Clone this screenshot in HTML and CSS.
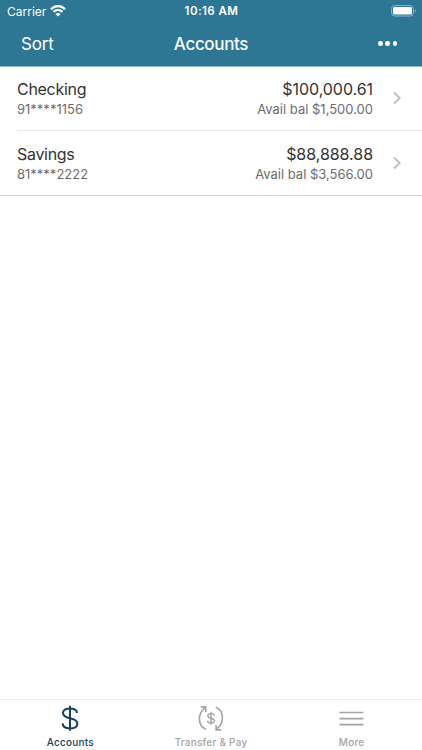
FILE: index.html
```html
<!DOCTYPE html>
<html lang="en">
<head>
  <meta charset="UTF-8" />
  <meta name="viewport" content="width=device-width, initial-scale=1.0" />
  <title>Accounts</title>
  <link rel="stylesheet" href="styles.css">
</head>
<body>
  <header class="header">
    <div class="status-bar">
      <div class="carrier">
        <span>Carrier</span>
        <svg width="16" height="12" viewBox="0 0 16 12" fill="none" stroke="#fff" stroke-width="2.3">
          <path d="M1 4.2C5 .2 11 .2 15 4.2" />
          <path d="M3.5 6.9c2.6-2.5 6.4-2.5 9 0" />
          <path d="M8 11.6 5.4 9c1.5-1.4 3.7-1.4 5.2 0z" fill="#fff" stroke="none" />
        </svg>
      </div>
      <span class="time">10:16 AM</span>
      <svg class="battery" width="26" height="12" viewBox="0 0 26 12">
        <rect x=".6" y=".6" width="21.8" height="10.4" rx="3" fill="none" stroke="#8fb7c7" stroke-width="1" />
        <rect x="2" y="2" width="19" height="7.6" rx="1.6" fill="#fff" />
        <path d="M23.8 4v3.6c1.4-.5 1.4-3.1 0-3.6z" fill="#8fb7c7" />
      </svg>
    </div>
    <nav class="nav-bar">
      <a class="sort">Sort</a>
      <h1>Accounts</h1>
      <div class="dots"><i></i><i></i><i></i></div>
    </nav>
  </header>

  <main class="accounts">
    <div class="account">
      <div class="info">
        <div class="name">Checking</div>
        <div class="number">91****1156</div>
      </div>
      <div class="info balance">
        <div class="amount">$100,000.61</div>
        <div class="avail">Avail bal $1,500.00</div>
      </div>
      <svg class="chevron" width="8" height="14" viewBox="0 0 8 14"><path d="M1 1.5 6.8 7 1 12.5" /></svg>
    </div>
    <div class="account">
      <div class="info">
        <div class="name">Savings</div>
        <div class="number">81****2222</div>
      </div>
      <div class="info balance">
        <div class="amount">$88,888.88</div>
        <div class="avail">Avail bal $3,566.00</div>
      </div>
      <svg class="chevron" width="8" height="14" viewBox="0 0 8 14"><path d="M1 1.5 6.8 7 1 12.5" /></svg>
    </div>
  </main>

  <footer class="tab-bar">
    <a class="tab active">
      <svg width="28" height="28" viewBox="0 0 28 28" stroke-width="2">
        <path d="M14 1.8v25M21 9C21 5.8 18 4.4 14 4.4S7 5.8 7 9c0 3.4 3.1 4.4 7 5.2s7.4 1.8 7.4 5.3c0 3.3-3.3 4.9-7.4 4.9s-7.3-1.6-7.4-5" />
      </svg>
      <span>Accounts</span>
    </a>
    <a class="tab transfer">
      <svg width="28" height="28" viewBox="0 0 28 28" stroke-width="1.6">
        <path d="M9 25.6C.7 21.6-.1 9.8 8.4 3.4M3.8 2.9h5v5" />
        <path d="M18.8 3c8.4 4 9 16 .6 22.4M24.2 25.9h-5.1v-5" />
        <path d="M14 7.8v13M17.3 11.6c-.1-1.4-1.5-2-3.3-2s-3.2.7-3.2 2.2c0 3.4 6.7 1.6 6.7 5 0 1.6-1.5 2.3-3.5 2.3s-3.4-.8-3.5-2.3" stroke-width="1.4" />
      </svg>
      <span>Transfer &amp; Pay</span>
    </a>
    <a class="tab">
      <svg width="28" height="28" viewBox="0 0 28 28" stroke-width="1.6">
        <path d="M1.5 8.5h24M1.5 14.6h24M1.5 20.6h24" />
      </svg>
      <span>More</span>
    </a>
  </footer>
</body>
</html>
```

FILE: styles.css
```css
* {
  margin: 0;
  padding: 0;
  box-sizing: border-box;
}

body {
  font-family: Inter, "Liberation Sans", sans-serif;
  background: #fff;
  color: #333;
  height: 100vh;
  display: flex;
  flex-direction: column;
  overflow: hidden;
}

svg {
  display: block;
}

.header {
  height: 67px;
  background: #2d7694;
  color: white;
  border-bottom: 1px solid #91b5c4;
}

.status-bar {
  height: 22px;
  padding: 0 6px 0 7px;
  display: grid;
  grid-template-columns: 1fr auto 1fr;
  align-items: center;
  font-size: 12px;
}

.carrier {
  display: flex;
  align-items: center;
  gap: 4px;
}

.time {
  font-weight: 600;
  font-size: 11.5px;
  letter-spacing: 0.45px;
}

.battery {
  justify-self: end;
  margin-right: -1px;
}

.nav-bar {
  height: 43px;
  padding: 0 21px;
  display: grid;
  grid-template-columns: 1fr auto 1fr;
  align-items: center;
  font-size: 17px;
}

.sort {
  letter-spacing: -0.2px;
}

.nav-bar h1 {
  font-size: 17px;
  font-weight: 500;
  letter-spacing: -0.35px;
}

.dots {
  display: flex;
  justify-content: flex-end;
  gap: 2.8px;
  margin-right: 4px;
}

.dots i {
  width: 4.4px;
  height: 4.4px;
  border-radius: 50%;
  background: white;
}

.accounts {
  flex: 1;
}

.account {
  height: 64px;
  margin-left: 17px;
  padding-right: 21px;
  display: flex;
  align-items: center;
  border-bottom: 1px solid #e9e9e9;
}

.account:last-child {
  height: 65px;
  margin-left: 0;
  padding-left: 17px;
  padding-top: 1px;
  border-color: #d2d2d2;
}

.info {
  line-height: 20px;
}

.balance {
  margin-left: auto;
  margin-right: 20px;
  text-align: right;
}

.name,
.amount {
  font-size: 16px;
  color: #333;
}

.name {
  letter-spacing: -0.3px;
}

.amount {
  letter-spacing: -0.05px;
}

.number,
.avail {
  font-size: 13px;
  color: #6d6d6d;
}

.chevron {
  margin-top: -1px;
}

.chevron path {
  fill: none;
  stroke: #bdbdc0;
  stroke-width: 1.8;
}

.tab-bar {
  height: 51px;
  border-top: 1px solid #ececec;
  display: grid;
  grid-template-columns: repeat(3, 1fr);
}

.tab {
  display: flex;
  flex-direction: column;
  align-items: center;
  padding-top: 4px;
  color: #a5a5a5;
  font-size: 10px;
  font-weight: 500;
  line-height: 12px;
  letter-spacing: 0.22px;
}

.tab svg {
  fill: none;
  stroke: currentColor;
}

.tab span {
  margin-top: 4px;
}

.tab.active {
  color: #173f5f;
}
```
